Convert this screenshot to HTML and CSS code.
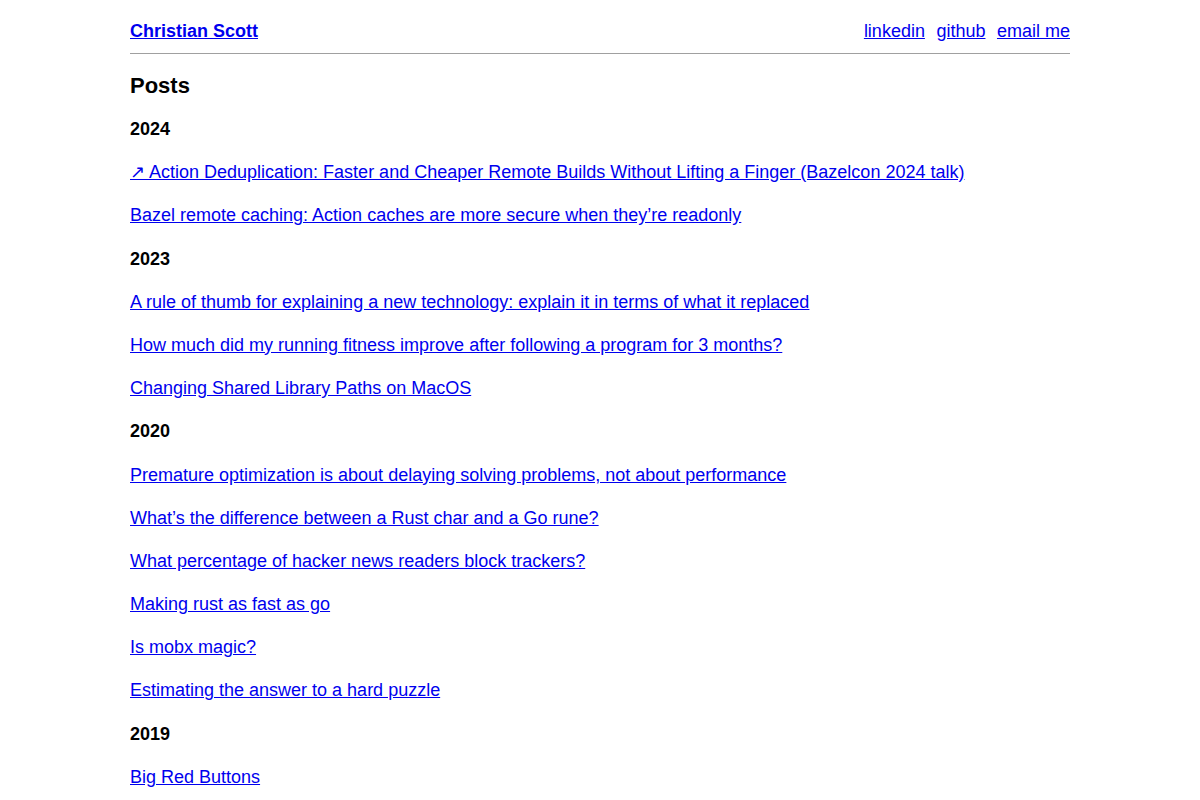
FILE: index.html
```html
<!DOCTYPE html>
<html lang="en">
<head>
<meta charset="utf-8">
<title>Christian Scott</title>
<link rel="stylesheet" href="styles.css">
</head>
<body>
<div class="page">
  <header class="site-header">
    <a class="site-title" href="#">Christian Scott</a>
    <nav class="site-nav">
      <a href="#">linkedin</a>
      <a href="#">github</a>
      <a href="#">email me</a>
    </nav>
  </header>
  <main>
    <h2 class="posts-title">Posts</h2>
    <h3 class="year">2024</h3>
    <p class="post"><a href="#">↗ Action Deduplication: Faster and Cheaper Remote Builds Without Lifting a Finger (Bazelcon 2024 talk)</a></p>
    <p class="post"><a href="#">Bazel remote caching: Action caches are more secure when they’re readonly</a></p>
    <h3 class="year">2023</h3>
    <p class="post"><a href="#">A rule of thumb for explaining a new technology: explain it in terms of what it replaced</a></p>
    <p class="post"><a href="#">How much did my running fitness improve after following a program for 3 months?</a></p>
    <p class="post"><a href="#">Changing Shared Library Paths on MacOS</a></p>
    <h3 class="year">2020</h3>
    <p class="post"><a href="#">Premature optimization is about delaying solving problems, not about performance</a></p>
    <p class="post"><a href="#">What’s the difference between a Rust char and a Go rune?</a></p>
    <p class="post"><a href="#">What percentage of hacker news readers block trackers?</a></p>
    <p class="post"><a href="#">Making rust as fast as go</a></p>
    <p class="post"><a href="#">Is mobx magic?</a></p>
    <p class="post"><a href="#">Estimating the answer to a hard puzzle</a></p>
    <h3 class="year">2019</h3>
    <p class="post"><a href="#">Big Red Buttons</a></p>
  </main>
</div>
</body>
</html>
```
FILE: styles.css
```css
html, body {
  margin: 0;
  padding: 0;
  background: #ffffff;
}
body {
  font-family: "Liberation Sans", Arial, sans-serif;
  font-size: 18px;
  color: #000000;
}
a {
  color: #0000ee;
}
.page {
  width: 940px;
  margin: 0 auto;
}
.site-header {
  display: flex;
  justify-content: space-between;
  align-items: center;
  padding: 19px 0 9px;
  line-height: 25px;
  border-bottom: 1px solid #a0a0a0;
}
.site-title {
  font-weight: bold;
}
.site-nav {
  display: flex;
  gap: 11.5px;
}
.posts-title {
  font-size: 22px;
  font-weight: bold;
  line-height: 27px;
  margin: 18px 0 17px;
}
.year {
  font-size: 18px;
  font-weight: bold;
  line-height: 1.4;
  margin: 18px 0;
}
.post {
  line-height: 1.4;
  margin: 18px 0;
}
```
